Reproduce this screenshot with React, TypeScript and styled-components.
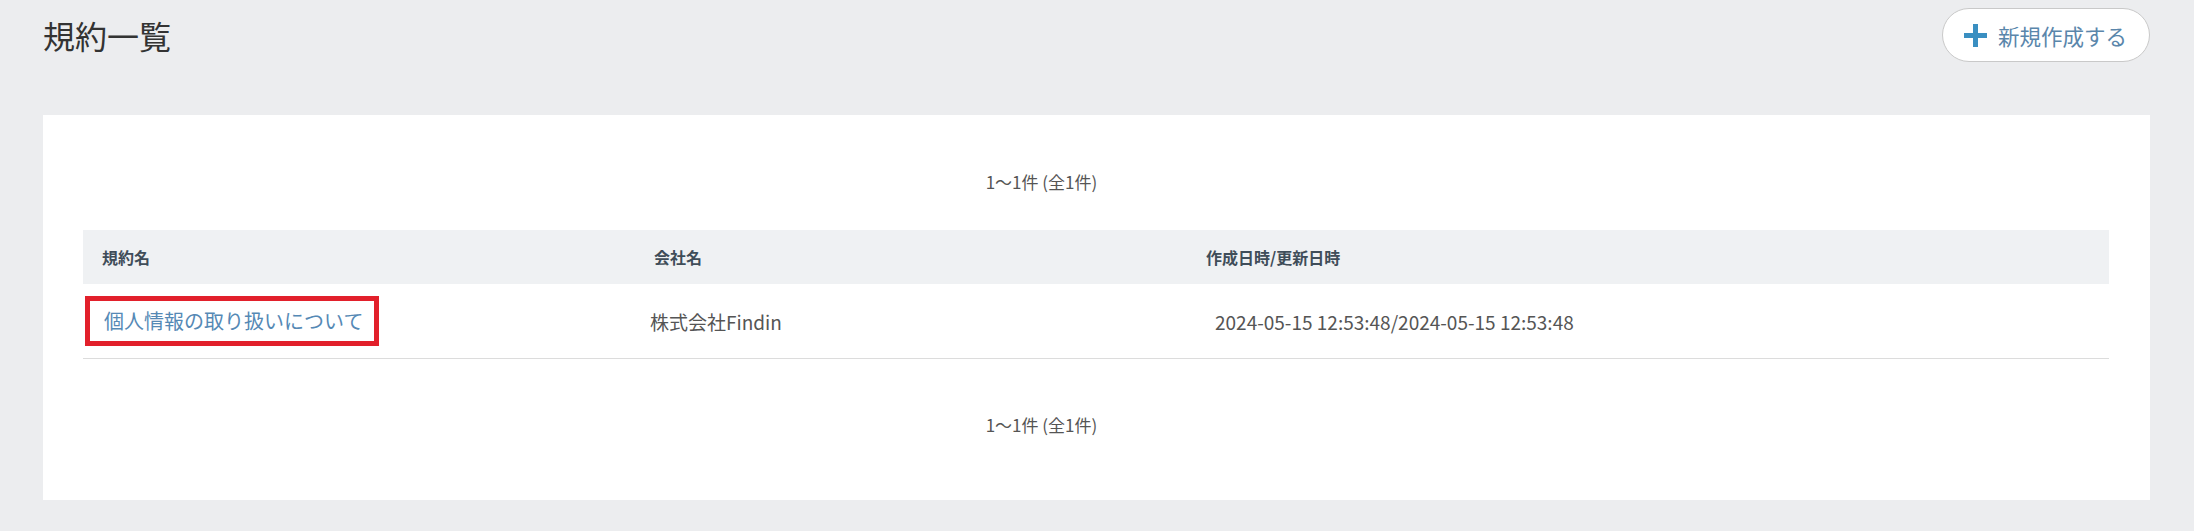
import React from 'react';
import styled, { createGlobalStyle } from 'styled-components';

const GlobalStyle = createGlobalStyle`
  html, body {
    margin: 0;
    padding: 0;
    background: #ecedef;
    font-family: "Noto Sans CJK JP", "Noto Sans", sans-serif;
    color: #555;
  }
`;

const Page = styled.div`
  padding: 8px 44px 31px 43px;
`;

const TopBar = styled.div`
  display: flex;
  align-items: center;
  justify-content: space-between;
  height: 54px;
`;

const Title = styled.h1`
  margin: 0;
  font-size: 32px;
  font-weight: 400;
  line-height: 1;
  color: #333;
`;

const NewButton = styled.button`
  display: flex;
  align-items: center;
  gap: 11px;
  height: 54px;
  width: 208px;
  padding: 0 0 0 21px;
  border: 1px solid #c9c9c9;
  border-radius: 27px;
  background: #fff;
  font-family: inherit;
  font-size: 21.5px;
  color: #5a86ab;
  cursor: pointer;
`;

const Card = styled.section`
  margin-top: 53px;
  background: #fff;
  padding: 54px 41px 63px 40px;
`;

const Pager = styled.div<{ $gap?: number }>`
  text-align: center;
  padding-right: 109px;
  font-size: 17px;
  line-height: 25px;
  color: #555;
  margin-top: ${(p) => p.$gap ?? 0}px;
`;

const Table = styled.div`
  margin-top: 36px;
`;

const Columns = `
  display: grid;
  grid-template-columns: 552px 552px 1fr;
  align-items: center;
`;

const HeadRow = styled.div`
  ${Columns}
  height: 54px;
  background: #eff1f3;
`;

const HeadCell = styled.div`
  padding-left: 19px;
  font-size: 16px;
  font-weight: 700;
  color: #3f4d59;
`;

const BodyRow = styled.div`
  ${Columns}
  height: 74px;
  border-bottom: 1px solid #dcdcdc;
`;

const BodyCell = styled.div<{ $indent: number }>`
  padding-left: ${(p) => p.$indent}px;
  font-size: 19px;
  color: #555;
`;

const Highlight = styled.span`
  display: inline-block;
  border: 5px solid #e2202b;
  padding: 0 11px 0 14px;
  line-height: 40px;
`;

const TermLink = styled.a`
  font-size: 20px;
  color: #5589b5;
  text-decoration: none;
`;

const PlusIcon = () => (
  <svg width="23" height="23" viewBox="0 0 23 23" aria-hidden="true">
    <rect x="9" y="0" width="5" height="23" fill="#3a8fc1" />
    <rect x="0" y="9" width="23" height="5" fill="#3a8fc1" />
  </svg>
);

const rows = [
  {
    name: '個人情報の取り扱いについて',
    company: '株式会社Findin',
    dates: '2024-05-15 12:53:48/2024-05-15 12:53:48',
  },
];

const App = () => {
  return (
    <>
      <GlobalStyle />
      <Page>
        <TopBar>
          <Title>規約一覧</Title>
          <NewButton>
            <PlusIcon />
            新規作成する
          </NewButton>
        </TopBar>

        <Card>
          <Pager>1〜1件 (全1件)</Pager>
          <Table>
            <HeadRow>
              <HeadCell>規約名</HeadCell>
              <HeadCell>会社名</HeadCell>
              <HeadCell>作成日時/更新日時</HeadCell>
            </HeadRow>
            {rows.map((row) => (
              <BodyRow key={row.name}>
                <BodyCell $indent={2}>
                  <Highlight>
                    <TermLink href="#">{row.name}</TermLink>
                  </Highlight>
                </BodyCell>
                <BodyCell $indent={15}>{row.company}</BodyCell>
                <BodyCell $indent={28}>{row.dates}</BodyCell>
              </BodyRow>
            ))}
          </Table>
          <Pager $gap={53}>1〜1件 (全1件)</Pager>
        </Card>
      </Page>
    </>
  );
};

export default App;
